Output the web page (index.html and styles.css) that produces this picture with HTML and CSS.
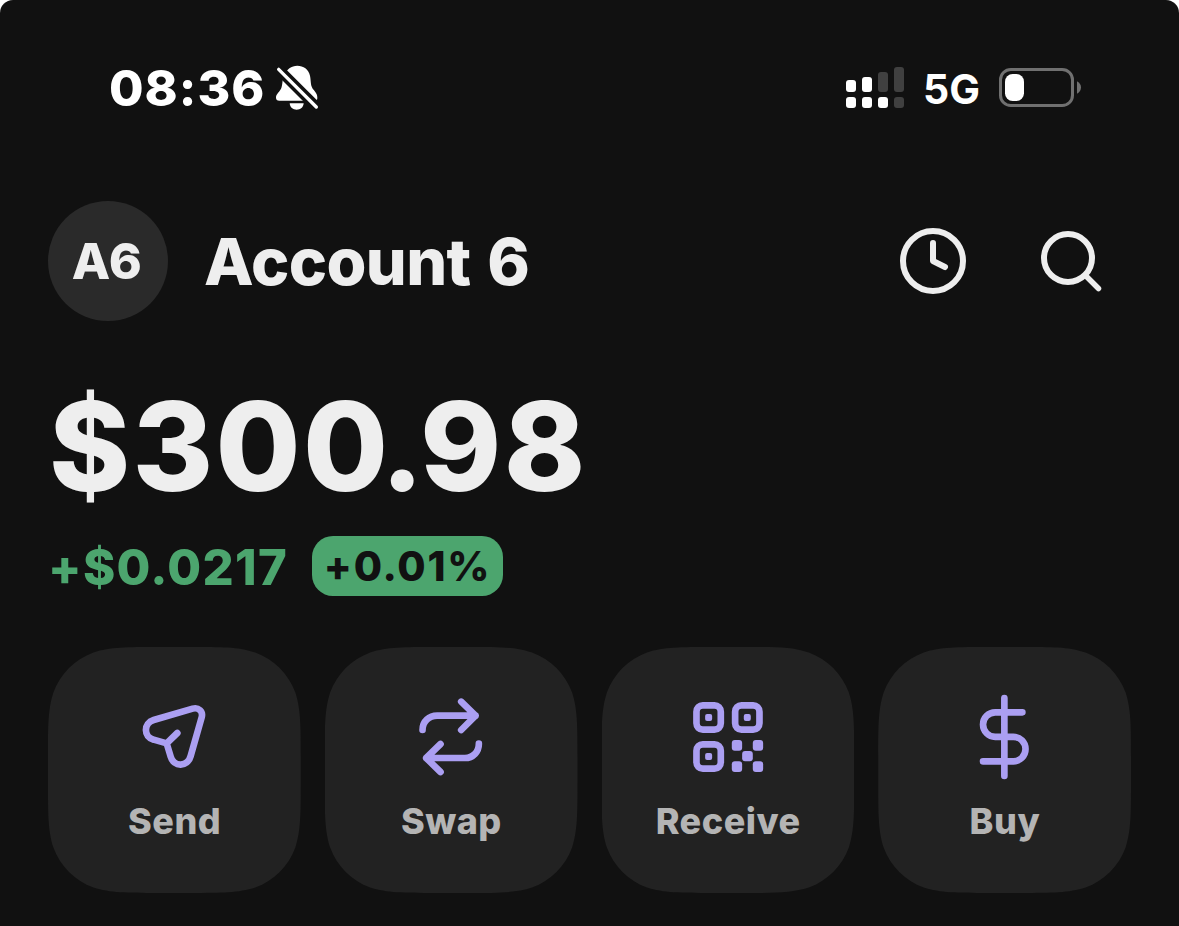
FILE: index.html
```html
<!DOCTYPE html>
<html lang="en">
<head>
<meta charset="utf-8">
<title>Wallet</title>
<link rel="stylesheet" href="styles.css">
</head>
<body>
<main class="screen">
  <div class="status">
    <span class="time">08:36</span>
    <svg class="bell" viewBox="555 40 135 150">
      <path fill="#fff" d="M622 48C640 48 656 58 660 78C664 98 660 108 672 122C680 132 682 137 682 145Q682 153 674 153H568Q558 153 558 144C558 133 570 126 574 115C579 100 576 90 582 78C590 58 604 48 622 48Z"/>
      <path fill="#fff" d="M599 161H641C640 174 631 180 620 180S600 174 599 161Z"/>
      <path stroke="#111" stroke-width="31" d="M550 43L700 193"/>
      <path stroke="#fff" stroke-width="10" stroke-linecap="round" d="M566 59L679 172"/>
    </svg>
    <svg class="signal" viewBox="45 45 180 135">
      <g fill="#fff">
        <rect x="48" y="90" width="30" height="36" rx="9"/><rect x="96" y="81" width="30" height="45" rx="9"/>
        <rect x="48" y="141" width="30" height="33" rx="9"/><rect x="96" y="141" width="30" height="33" rx="9"/><rect x="144" y="141" width="30" height="33" rx="9"/>
      </g>
      <g fill="#404040">
        <rect x="144" y="66" width="30" height="60" rx="9"/><rect x="192" y="51" width="30" height="75" rx="9"/><rect x="192" y="141" width="30" height="33" rx="9"/>
      </g>
    </svg>
    <span class="network">5G</span>
    <svg class="battery" viewBox="504 51 252 123">
      <rect x="511.500" y="58.500" width="216" height="108" rx="31" fill="none" stroke="#707070" stroke-width="9"/>
      <rect x="525" y="72" width="57" height="81" rx="23" fill="#fff"/>
      <path fill="#707070" d="M741 94C749 98 753 105 753 112.500S749 127 741 131Z"/>
    </svg>
  </div>

  <header class="account">
    <div class="avatar"><span>A6</span></div>
    <h1 class="name">Account 6</h1>
    <svg class="head-icon" viewBox="893 221 80 80">
      <circle cx="933" cy="261" r="30"/>
      <path d="M933 243V261L945 267"/>
    </svg>
    <svg class="head-icon" viewBox="1031 221 80 80">
      <circle cx="1068" cy="258" r="24"/>
      <path class="handle" d="M1086 276L1098.500 288.500"/>
    </svg>
  </header>

  <div class="balance">$30<span class="tight">0.</span>98</div>
  <div class="change">
    <span class="delta">+$0.0217</span>
    <span class="badge"><span>+0.01%</span></span>
  </div>

  <nav class="actions">
    <div class="card">
      <svg class="icon" viewBox="268 156 270 270">
        <path d="M381 310L342 299C311 291 311 249 342 240L459 206C476 201 491 214 486 232L453 348C444 382 402 382 393 350L381 310L413 279"/>
      </svg>
      <span class="label">Send</span>
    </div>
    <div class="card">
      <svg class="icon" viewBox="18.400 36 270 270">
        <path d="M68 150C68 123 88 107 112 107H227M184 65L227 107L184 150"/>
        <path d="M237 191C237 215 220 234 195 234H79M122 192L79 234L122 276"/>
      </svg>
      <span class="label">Swap</span>
    </div>
    <div class="card">
      <svg class="icon" viewBox="8.600 21 270 270">
        <rect x="49" y="61" width="73" height="73" rx="19"/>
        <rect x="165" y="61" width="73" height="73" rx="19"/>
        <rect x="49" y="178" width="73" height="73" rx="19"/>
        <g class="dots">
          <rect x="75" y="87" width="21" height="21" rx="6"/><rect x="191" y="87" width="21" height="21" rx="6"/><rect x="75" y="204" width="21" height="21" rx="6"/>
          <rect x="155" y="165" width="31" height="32" rx="9"/><rect x="218" y="165" width="31" height="32" rx="9"/>
          <rect x="186" y="198" width="32" height="31" rx="9"/>
          <rect x="155" y="229" width="31" height="32" rx="9"/><rect x="218" y="229" width="31" height="32" rx="9"/>
        </g>
      </svg>
      <span class="label">Receive</span>
    </div>
    <div class="card">
      <svg class="icon" viewBox="-1.100 36 270 270">
        <path d="M132 54V288M186 97H104.500a36.500 36.750 0 0 0 0 73.500H159a36.500 36.750 0 0 1 0 73.500H68"/>
      </svg>
      <span class="label">Buy</span>
    </div>
  </nav>
</main>
</body>
</html>
```

FILE: styles.css
```css
* { box-sizing: border-box; }
body { margin: 0; background: #fff; }
svg { display: block; flex: none; }

.screen {
  width: 1179px;
  height: 926px;
  padding: 0 48px;
  overflow: hidden;
  background: #111;
  border-radius: 13px 13px 0 0;
  color: #eee;
  font-family: Inter, "Liberation Sans", sans-serif;
  font-weight: 800;
  white-space: nowrap;
}

.status {
  display: flex;
  align-items: center;
  height: 175px;
  padding: 0 49px 0 61px;
  color: #fff;
}
.time { width: 166px; font-size: 50px; line-height: 60px; letter-spacing: 1px; }
.bell { width: 45px; height: 50px; }
.signal { width: 60px; height: 45px; margin-left: auto; }
.network { width: 75px; margin: 3px 0 0 18px; font-size: 41px; line-height: 50px; font-weight: 650; }
.battery { width: 84px; height: 41px; }

.account {
  display: flex;
  align-items: center;
  height: 120px;
  margin-top: 26px;
}
.avatar {
  display: flex;
  align-items: center;
  justify-content: center;
  width: 120px;
  height: 120px;
  padding-right: 4px;
  border-radius: 50%;
  background: #2a2a2a;
  font-size: 50px;
  letter-spacing: -1.500px;
}
.name { margin: 2px auto 0 36px; font-size: 64.500px; line-height: 78px; font-weight: 850; letter-spacing: -0.600px; word-spacing: 3px; }
.head-icon {
  width: 80px;
  height: 80px;
  fill: none;
  stroke: #eee;
  stroke-width: 6;
  stroke-linecap: round;
  stroke-linejoin: round;
}
.head-icon + .head-icon { margin: 0 20px 0 58px; }
.handle { stroke-width: 5.500; }

.balance { margin: 51px 0 0 1px; height: 149px; font-size: 123px; line-height: 150px; letter-spacing: 2.300px; }
.tight { letter-spacing: -3.800px; }

.change { display: flex; align-items: center; height: 60px; margin-top: 15px; font-feature-settings: "calt" 0; }
.delta { width: 264px; margin-top: 3px; color: #4ca56e; font-size: 49px; line-height: 60px; letter-spacing: 1.300px; }
.badge {
  display: flex;
  align-items: center;
  justify-content: center;
  width: 191px;
  height: 60px;
  border-radius: 21px;
  background: #4ca56e;
  color: #111;
  font-size: 41px;
  letter-spacing: 1.700px;
}

.actions { display: grid; grid-template-columns: repeat(4, 1fr); gap: 24px; margin-top: 51px; }
.card {
  display: flex;
  flex-direction: column;
  align-items: center;
  height: 246px;
  padding-top: 45px;
  background: #222;
  clip-path: path("M110.070 0H142.680C174.380 0 190.220 0 204.510 4.720L207.280 5.390C225.910 12.170 240.580 26.840 247.360 45.470C252.750 62.530 252.750 78.370 252.750 110.070V135.930C252.750 167.630 252.750 183.470 247.360 200.530C240.580 219.160 225.910 233.830 207.280 240.610C190.220 246 174.380 246 142.680 246H110.070C78.370 246 62.530 246 45.470 240.610C26.840 233.830 12.170 219.160 5.390 200.530C0 183.470 0 167.630 0 135.930V110.070C0 78.370 0 62.530 5.390 45.470C12.170 26.840 26.840 12.170 45.470 5.390C62.530 0 78.370 0 110.070 0Z");
}
.icon {
  width: 90px;
  height: 90px;
  fill: none;
  stroke: #ab9ff2;
  stroke-width: 20;
  stroke-linecap: round;
  stroke-linejoin: round;
}
.dots { fill: #ab9ff2; stroke: none; }
.label { margin: 17px 0 0 0.500px; color: #b4b4b4; font-size: 36px; line-height: 44px; letter-spacing: 0.500px; }
```
